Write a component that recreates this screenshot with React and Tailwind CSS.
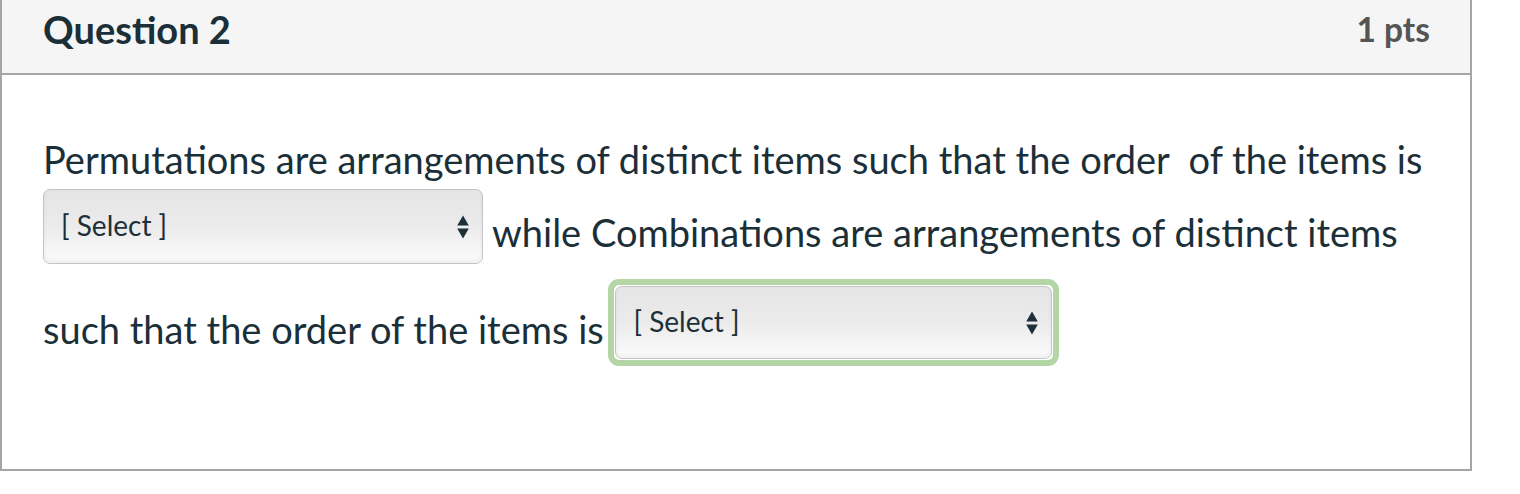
import React from "react";

function Arrows() {
  return (
    <svg width="12" height="24" viewBox="0 0 12 24" className="shrink-0">
      <path d="M6 0.5 L11.8 10.5 L0.2 10.5 Z" fill="#1d3039" />
      <path d="M6 23.5 L11.8 13.5 L0.2 13.5 Z" fill="#1d3039" />
    </svg>
  );
}

function SelectBox({ width, height }) {
  return (
    <span
      className="inline-flex items-center justify-between rounded-[7px] border border-[#c4c4c4] bg-gradient-to-b from-[#e5e5e5] via-[#ebebeb] to-[#fcfcfc] pl-[17px] pr-[13px] shadow-[inset_0_-3px_4px_rgba(0,0,0,0.05)] text-[28px] leading-normal text-[#1d3039]"
      style={{ width, height }}
    >
      <span className="-mt-[3px]">[ Select ]</span>
      <Arrows />
    </span>
  );
}

export default function App() {
  return (
    <div className="bg-white w-[1520px] h-[494px] font-['Lato','Inter',sans-serif] text-[#1b2f39]">
      <div className="w-[1472px] h-[471px] border-2 border-t-0 border-[#a5a5a5]">
        {/* Header */}
        <div className="flex items-start justify-between h-[75px] bg-[#f5f5f5] border-b-2 border-[#a5a5a5] pl-[41px] pr-[40px]">
          <h2 className="text-[38px] font-bold mt-[1px]">Question 2</h2>
          <span className="text-[33.5px] font-bold text-[#555555] mt-[4px]">1 pts</span>
        </div>

        {/* Body */}
        <div className="pl-[41px] pr-[42px] pt-[55px]">
          <p className="text-[38px] leading-[59px]">
            Permutations are arrangements of distinct items such that the order&nbsp; of the items is{" "}
            <span className="inline-block align-[11px] mb-[15px]">
              <SelectBox width="440px" height="75px" />
            </span>{" "}
            while Combinations are arrangements of distinct items such that the order of the items is{" "}
            <span className="inline-block align-[12px] -ml-[5px] rounded-[11px] border-[6px] border-[#b4d5a5] p-[1px]">
              <SelectBox width="437px" height="73px" />
            </span>
          </p>
        </div>
      </div>
    </div>
  );
}
